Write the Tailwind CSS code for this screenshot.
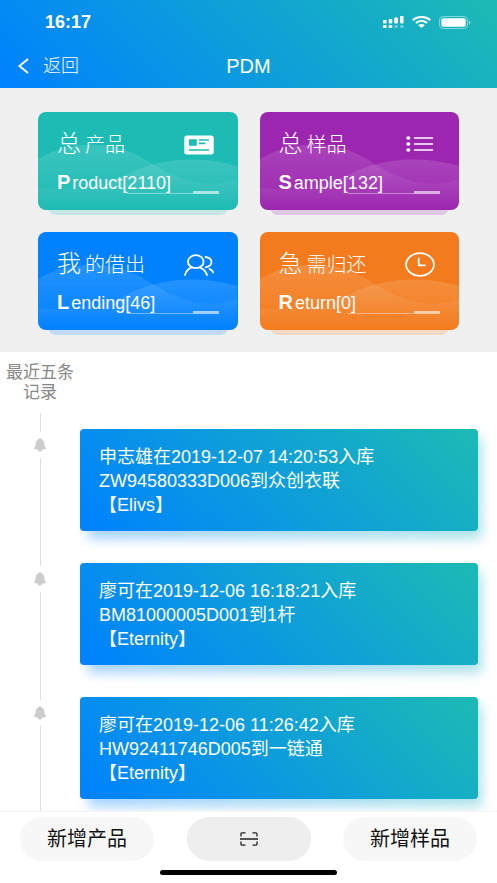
<!DOCTYPE html>
<html lang="zh-CN">
<head>
<meta charset="utf-8">
<meta name="viewport" content="width=device-width, initial-scale=1">
<title>PDM</title>
<script src="https://cdn.jsdelivr.net/npm/@tailwindcss/browser@4"></script>
</head>
<body class="flex h-screen flex-col overflow-hidden bg-white font-['Liberation_Sans','Noto_Sans_CJK_SC',sans-serif] text-lg">

<svg class="absolute size-0" aria-hidden="true">
  <linearGradient id="fade" x1="0" y1="0" x2="0" y2="1">
    <stop offset="0" stop-color="#fff" stop-opacity=".14"/>
    <stop offset="1" stop-color="#fff" stop-opacity="0"/>
  </linearGradient>
  <symbol id="waves" viewBox="0 0 200 98" preserveAspectRatio="none">
    <path fill="url(#fade)" d="M0 47C22 34 42 32 62 33C92 35 108 48 125 58C148 70 172 77 200 67V98H0Z"/>
    <path fill="url(#fade)" d="M0 76C30 80 62 76 90 62C120 48 155 42 200 54V98H0Z"/>
  </symbol>
  <symbol id="bell" viewBox="0 0 14 15">
    <path fill="#ccc" d="M7 0C7.6 0 8 .5 8.1 1.1C10.4 1.8 11.6 3.8 11.7 6.3C11.8 8.4 12.3 9.6 13.6 10.7C13.8 11.6 13 12 9.1 12.5C8.9 14 8.2 14.6 7 14.6S5.1 14 4.9 12.5C1 12 .2 11.6 .4 10.7C1.7 9.6 2.2 8.4 2.3 6.3C2.4 3.8 3.6 1.8 5.9 1.1C6 .5 6.4 0 7 0Z"/>
  </symbol>
</svg>

<header class="shrink-0 bg-linear-[45deg,#0081ff,#1cbbb4] text-white">
  <div class="flex h-11 items-center justify-between pr-[26px] pl-[45px]">
    <time class="font-bold">16:17</time>
    <div class="flex items-center gap-2">
      <svg class="h-3 w-[21px]" viewBox="0 0 21 12" fill="#fff" aria-label="信号">
        <rect x="0" y="4" width="3.6" height="3.4" rx="1"/><rect x="5.7" y="3" width="3.6" height="4.4" rx="1"/>
        <rect x="11.3" y="1.4" width="3.6" height="6" rx="1"/><rect x="17" y="0" width="3.6" height="7.4" rx="1"/>
        <rect x="0" y="9" width="3.6" height="3" rx="1"/><rect x="5.7" y="9" width="3.6" height="3" rx="1"/>
        <rect x="11.3" y="9" width="3.6" height="3" rx="1" opacity=".35"/><rect x="17" y="9" width="3.6" height="3" rx="1" opacity=".35"/>
      </svg>
      <svg class="h-3 w-[19px]" viewBox="0 0 19 12" aria-label="无线网络">
        <g fill="none" stroke="#fff" stroke-width="2.1"><path d="M.7 4.1C5.6-.1 13.4-.1 18.3 4.1"/><path d="M3.9 7C7.2 4.3 11.8 4.3 15.1 7"/></g>
        <path fill="#fff" d="M6.2 9.2C8 7.6 11 7.6 12.8 9.2L9.5 12Z"/>
      </svg>
      <svg class="h-[13px] w-8" viewBox="0 0 32 13" aria-label="电池">
        <rect x=".5" y=".5" width="28" height="12" rx="3.5" fill="none" stroke="#fff" stroke-opacity=".45"/>
        <rect x="2.3" y="2.2" width="24.4" height="8.6" rx="2" fill="#fff"/>
        <path d="M30 4.5C31.8 5 31.8 8 30 8.5Z" fill="#fff" fill-opacity=".5"/>
      </svg>
    </div>
  </div>
  <nav class="grid h-11 grid-cols-3 items-center">
    <button class="flex items-center gap-[14px] pl-[18px]">
      <svg class="h-4 w-[11px]" viewBox="0 0 11 16" fill="none" stroke="#fff" stroke-width="2"><path d="M10 1L1.5 8L10 15"/></svg>
      <span class="font-light">返回</span>
    </button>
    <h1 class="text-center text-xl">PDM</h1>
  </nav>
</header>

<main class="min-h-0 flex-1 overflow-y-auto [scrollbar-width:none]">
  <section class="grid grid-cols-2 gap-[22px] bg-[#f0f0f0] px-[38px] pt-6 pb-[22px]">

    <a href="#product" class="relative isolate block text-white">
      <span class="absolute inset-x-[10px] -bottom-[5px] -z-10 h-5 rounded-lg bg-[#1cbbb4]/20"></span>
      <div class="relative h-[98px] overflow-hidden rounded-lg bg-[#1cbbb4] px-[19px] pt-4">
        <svg class="absolute inset-0 h-full w-full"><use href="#waves"/></svg>
        <div class="relative flex items-center justify-between pr-[5px]">
          <h2 class="text-xl leading-8 font-light"><span class="mr-1 text-2xl leading-8">总</span>产品</h2>
          <svg class="h-5 w-[30px]" viewBox="0 0 30 20">
            <path fill="#fff" fill-rule="evenodd" d="M3 .5H27Q29.7.5 29.7 3V17Q29.7 19.5 27 19.5H3Q.3 19.5.3 17V3Q.3.5 3 .5ZM5 4.3V10.7H12.8V4.3ZM15 4.3V5.7H25V4.3ZM15 7.6V9.2H21.3V7.6ZM5 14.2V15.7H25V14.2Z"/>
          </svg>
        </div>
        <p class="relative mt-[9px] leading-6"><b class="mr-0.5 text-xl leading-6">P</b>roduct[2110]</p>
        <div class="absolute right-[19px] bottom-4 flex w-[92px] items-end"><i class="h-px flex-1 bg-white/40"></i><i class="h-[3px] w-[26px] bg-white/60"></i></div>
      </div>
    </a>

    <a href="#sample" class="relative isolate block text-white">
      <span class="absolute inset-x-[10px] -bottom-[5px] -z-10 h-5 rounded-lg bg-[#9c26b0]/20"></span>
      <div class="relative h-[98px] overflow-hidden rounded-lg bg-[#9c26b0] px-[19px] pt-4">
        <svg class="absolute inset-0 h-full w-full"><use href="#waves"/></svg>
        <div class="relative flex items-center justify-between pr-[5px]">
          <h2 class="text-xl leading-8 font-light"><span class="mr-1 text-2xl leading-8">总</span>样品</h2>
          <svg class="h-5 w-[30px]" viewBox="0 0 30 20">
            <g fill="#fff"><ellipse cx="3.3" cy="3" rx="2.1" ry="1.8"/><ellipse cx="3.3" cy="9" rx="2.1" ry="1.8"/><ellipse cx="3.3" cy="15" rx="2.1" ry="1.8"/></g>
            <path stroke="#fff" stroke-width="1.5" stroke-linecap="round" d="M9.5 3H27.5M9.5 9H27.5M9.5 15H27.5"/>
          </svg>
        </div>
        <p class="relative mt-[9px] leading-6"><b class="mr-0.5 text-xl leading-6">S</b>ample[132]</p>
        <div class="absolute right-[19px] bottom-4 flex w-[92px] items-end"><i class="h-px flex-1 bg-white/40"></i><i class="h-[3px] w-[26px] bg-white/60"></i></div>
      </div>
    </a>

    <a href="#lending" class="relative isolate block text-white">
      <span class="absolute inset-x-[10px] -bottom-[5px] -z-10 h-5 rounded-lg bg-[#0081ff]/20"></span>
      <div class="relative h-[98px] overflow-hidden rounded-lg bg-[#0081ff] px-[19px] pt-4">
        <svg class="absolute inset-0 h-full w-full"><use href="#waves"/></svg>
        <div class="relative flex items-center justify-between pr-[5px]">
          <h2 class="text-xl leading-8 font-light"><span class="mr-1 text-2xl leading-8">我</span>的借出</h2>
          <svg class="h-[22px] w-[30px]" viewBox="0 0 30 22" fill="none" stroke="#fff" stroke-width="1.8" stroke-linecap="round">
            <ellipse cx="11.8" cy="7.7" rx="7.8" ry="6.5"/>
            <path d="M1 21C2 17.5 4.3 14.7 7.7 13.4M16.5 13.8C19.7 15.1 22 17.8 23 21"/>
            <path d="M21.5 3C25 3.4 27.5 5.4 27.5 8.1C27.5 10.7 25.3 12.8 21.7 13.3M25.5 14.8C27.4 15.6 28.6 16.9 29.2 18.4"/>
          </svg>
        </div>
        <p class="relative mt-[9px] leading-6"><b class="mr-0.5 text-xl leading-6">L</b>ending[46]</p>
        <div class="absolute right-[19px] bottom-4 flex w-[92px] items-end"><i class="h-px flex-1 bg-white/40"></i><i class="h-[3px] w-[26px] bg-white/60"></i></div>
      </div>
    </a>

    <a href="#return" class="relative isolate block text-white">
      <span class="absolute inset-x-[10px] -bottom-[5px] -z-10 h-5 rounded-lg bg-[#f37b1d]/20"></span>
      <div class="relative h-[98px] overflow-hidden rounded-lg bg-[#f37b1d] px-[19px] pt-4">
        <svg class="absolute inset-0 h-full w-full"><use href="#waves"/></svg>
        <div class="relative flex items-center justify-between pr-[5px]">
          <h2 class="text-xl leading-8 font-light"><span class="mr-1 text-2xl leading-8">急</span>需归还</h2>
          <svg class="h-[25px] w-[30px]" viewBox="0 0 30 25" fill="none" stroke="#fff" stroke-width="1.8">
            <ellipse cx="15" cy="12.5" rx="13.9" ry="11.4"/>
            <path stroke-linecap="round" stroke-linejoin="round" d="M13.7 6.5V13.3H20"/>
          </svg>
        </div>
        <p class="relative mt-[9px] leading-6"><b class="mr-0.5 text-xl leading-6">R</b>eturn[0]</p>
        <div class="absolute right-[19px] bottom-4 flex w-[92px] items-end"><i class="h-px flex-1 bg-white/40"></i><i class="h-[3px] w-[26px] bg-white/60"></i></div>
      </div>
    </a>
  </section>

  <section>
    <h2 class="w-20 px-1 pt-[11px] pb-[10px] text-center text-[17px] leading-5 text-[#888]">最近五条<br>记录</h2>
    <ol>
      <li class="flex pr-[19px]">
        <div class="flex w-20 shrink-0 flex-col items-center">
          <i class="h-[19px] w-px bg-[#ddd]"></i>
          <svg class="my-[6px] h-[14px] w-[14px]"><use href="#bell"/></svg>
          <i class="w-px flex-1 bg-[#ddd]"></i>
        </div>
        <div class="relative isolate my-4 flex-1 text-white">
          <span class="absolute top-2 -right-1 -bottom-2 left-2 -z-10 bg-linear-[45deg,#0081ff,#1cbbb4] opacity-35 blur-[6px]"></span>
          <p class="rounded bg-linear-[45deg,#0081ff,#1cbbb4] px-[19px] pt-4 pb-[14px] leading-6">申志雄在2019-12-07 14:20:53入库<br>ZW94580333D006到众创衣联<br>【Elivs】</p>
        </div>
      </li>
      <li class="flex pr-[19px]">
        <div class="flex w-20 shrink-0 flex-col items-center">
          <i class="h-[19px] w-px bg-[#ddd]"></i>
          <svg class="my-[6px] h-[14px] w-[14px]"><use href="#bell"/></svg>
          <i class="w-px flex-1 bg-[#ddd]"></i>
        </div>
        <div class="relative isolate my-4 flex-1 text-white">
          <span class="absolute top-2 -right-1 -bottom-2 left-2 -z-10 bg-linear-[45deg,#0081ff,#1cbbb4] opacity-35 blur-[6px]"></span>
          <p class="rounded bg-linear-[45deg,#0081ff,#1cbbb4] px-[19px] pt-4 pb-[14px] leading-6">廖可在2019-12-06 16:18:21入库<br>BM81000005D001到1杆<br>【Eternity】</p>
        </div>
      </li>
      <li class="flex pr-[19px]">
        <div class="flex w-20 shrink-0 flex-col items-center">
          <i class="h-[19px] w-px bg-[#ddd]"></i>
          <svg class="my-[6px] h-[14px] w-[14px]"><use href="#bell"/></svg>
          <i class="w-px flex-1 bg-[#ddd]"></i>
        </div>
        <div class="relative isolate my-4 flex-1 text-white">
          <span class="absolute top-2 -right-1 -bottom-2 left-2 -z-10 bg-linear-[45deg,#0081ff,#1cbbb4] opacity-35 blur-[6px]"></span>
          <p class="rounded bg-linear-[45deg,#0081ff,#1cbbb4] px-[19px] pt-4 pb-[14px] leading-6">廖可在2019-12-06 11:26:42入库<br>HW92411746D005到一链通<br>【Eternity】</p>
        </div>
      </li>
    </ol>
  </section>
</main>

<footer class="relative shrink-0 border-t border-[#f4f4f4] bg-white pb-2">
  <div class="flex items-center justify-between px-5 pt-[5px] pb-[9px] text-xl text-[#111]">
    <button class="h-11 rounded-full bg-[#f7f7f7] px-[27px]">新增产品</button>
    <button class="h-11 rounded-full bg-[#eee] px-[53px]" aria-label="扫一扫">
      <svg class="h-[14px] w-[18px]" viewBox="0 0 18 14" fill="none" stroke="#222" stroke-width="1.3">
        <path d="M1 4.5V2Q1 .8 2.4.8H5.5M12.5.8H15.6Q17 .8 17 2V4.5M17 9.5V12Q17 13.2 15.6 13.2H12.5M5.5 13.2H2.4Q1 13.2 1 12V9.5M0 7H18"/>
      </svg>
    </button>
    <button class="h-11 rounded-full bg-[#f7f7f7] px-[27px]">新增样品</button>
  </div>
  <div class="mx-auto h-[5px] w-[177px] rounded-full bg-black"></div>
</footer>
</body>
</html>
